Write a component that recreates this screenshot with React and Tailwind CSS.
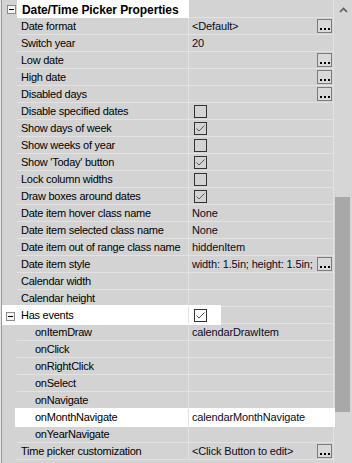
import React from 'react';

const rows = [
  { label: 'Date/Time Picker Properties', kind: 'header' },
  { label: 'Date format', value: '<Default>', btn: true },
  { label: 'Switch year', value: '20' },
  { label: 'Low date', btn: true },
  { label: 'High date', btn: true },
  { label: 'Disabled days', btn: true },
  { label: 'Disable specified dates', check: false },
  { label: 'Show days of week', check: true },
  { label: 'Show weeks of year', check: false },
  { label: "Show 'Today' button", check: true },
  { label: 'Lock column widths', check: false },
  { label: 'Draw boxes around dates', check: true },
  { label: 'Date item hover class name', value: 'None' },
  { label: 'Date item selected class name', value: 'None' },
  { label: 'Date item out of range class name', value: 'hiddenItem' },
  { label: 'Date item style', value: 'width: 1.5in; height: 1.5in;', btn: true },
  { label: 'Calendar width' },
  { label: 'Calendar height' },
  { label: 'Has events', check: true, expand: true, hl: 'events' },
  { label: 'onItemDraw', value: 'calendarDrawItem', sub: true },
  { label: 'onClick', sub: true },
  { label: 'onRightClick', sub: true },
  { label: 'onSelect', sub: true },
  { label: 'onNavigate', sub: true },
  { label: 'onMonthNavigate', value: 'calendarMonthNavigate', sub: true, hl: 'month' },
  { label: 'onYearNavigate', sub: true },
  { label: 'Time picker customization', value: '<Click Button to edit>', btn: true },
];

const font = { fontFamily: '"Liberation Sans", Arial, sans-serif' };

const Expander = ({ className }) => (
  <div className={`absolute w-[9px] h-[9px] border border-[#8a8a8a] bg-[#f4f4f4] flex items-center justify-center ${className}`}>
    <div className="w-[5px] h-[1px] bg-black" />
  </div>
);

const CheckBox = ({ checked }) => (
  <div className="mt-[2px] ml-[2px] w-[13px] h-[13px] border border-[#333333] flex items-center justify-center">
    {checked && (
      <svg width="11" height="11" viewBox="0 0 11 11">
        <polyline points="1.5,5.5 4,8 9.5,2.5" fill="none" stroke="#5a5a5a" strokeWidth="1" />
      </svg>
    )}
  </div>
);

const DotsButton = () => (
  <div className="absolute right-[1px] top-[1px] w-[15px] h-[14px] border border-[#7c7c7c] bg-[#d9d9d9] flex items-end justify-center gap-[2px] pb-[2px]">
    <div className="w-[2px] h-[2px] bg-black" />
    <div className="w-[2px] h-[2px] bg-black" />
    <div className="w-[2px] h-[2px] bg-black" />
  </div>
);

const Row = ({ row }) => {
  if (row.kind === 'header') {
    return (
      <div className="relative flex h-[17px]">
        <div className="absolute left-[15px] top-[-1px] w-[172px] h-[18px] bg-white z-[1]" />
        <div className="relative w-[15px] shrink-0">
          <Expander className="left-[5px] top-[4px]" />
        </div>
        <div className="flex flex-1 border-b border-[#e2e2e2]">
          <div className="relative z-[2] w-[172px] pl-[5px] pt-[1px] text-[12px] leading-[16px] font-bold text-black tracking-[-0.1px] whitespace-nowrap">
            {row.label}
          </div>
          <div className="flex-1" />
        </div>
      </div>
    );
  }
  return (
    <div className="relative flex h-[17px]">
      {row.hl === 'events' && <div className="absolute left-0 top-[-2px] w-[219px] h-[20px] bg-white z-[1]" />}
      {row.hl === 'month' && <div className="absolute left-[13px] top-[-1px] w-[320px] h-[19px] bg-white z-[1]" />}
      <div className="relative z-[2] w-[15px] shrink-0">
        {row.expand && <Expander className="left-[4px] top-[5px]" />}
      </div>
      <div className="flex flex-1 border-b border-[#e2e2e2]">
        <div className={`relative z-[2] w-[172px] shrink-0 border-r border-[#e2e2e2] text-[11px] leading-[16px] text-black tracking-[-0.25px] whitespace-nowrap overflow-hidden ${row.sub ? 'pl-[18px]' : 'pl-[4px]'}`}>
          {row.label}
        </div>
        <div className="relative z-[2] flex-1 text-[11px] leading-[16px] text-[#0a0a1e] tracking-[-0.15px] whitespace-nowrap pl-[3px]">
          {row.check !== undefined ? <CheckBox checked={row.check} /> : row.value}
          {row.btn && <DotsButton />}
        </div>
      </div>
    </div>
  );
};

export default function App() {
  return (
    <div className="flex w-[352px] h-[463px] bg-[#d3d3d3] overflow-hidden" style={font}>
      <div className="w-[2px] shrink-0 bg-[#e6e6e6] border-r border-[#9a9a9a]" />
      <div className="flex flex-col w-[331px] shrink-0 pt-[1px] relative">
        {rows.map((row, i) => (
          <Row key={i} row={row} />
        ))}
      </div>
      <div className="flex flex-col flex-1 border-l border-[#e2e2e2] bg-[#d6d6d6]">
        <div className="h-[19px] flex items-center justify-center pl-[1px]">
          <svg width="9" height="6" viewBox="0 0 9 6">
            <polyline points="1,5 4.5,1.5 8,5" fill="none" stroke="#5e5e5e" strokeWidth="1.6" />
          </svg>
        </div>
        <div className="mt-[178px] ml-[1px] w-[15px] h-[215px] bg-[#a8a8a8]" />
      </div>
    </div>
  );
}
